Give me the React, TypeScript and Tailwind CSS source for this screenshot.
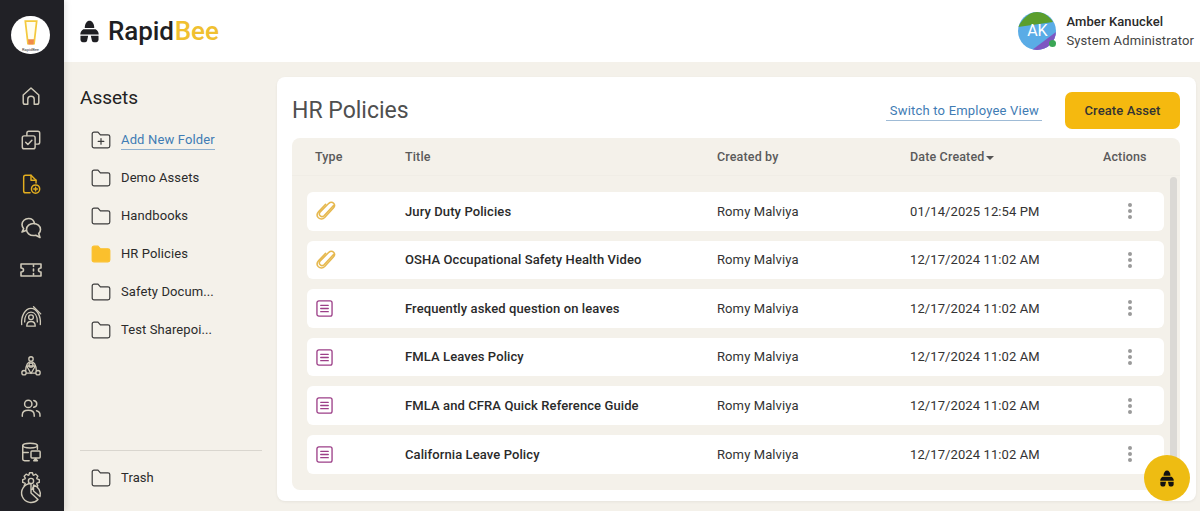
import React from "react";

const F = "font-['Roboto',sans-serif]";

function Bee({ className = "", color = "#1f1f23" }: { className?: string; color?: string }) {
  return (
    <svg viewBox="0 0 20 24" className={className} fill={color}>
      <path d="M5 8.2 C5 3.4 7.4 0.6 10 0.6 C12.6 0.6 15 3.4 15 8.2 Z" />
      <path d="M3.6 9.6 H16.4 C18.5 11 19.7 13 19.7 15.2 H0.3 C0.3 13 1.5 11 3.6 9.6 Z" />
      <path d="M0.5 16.5 H8.6 L7.5 21.6 C7.3 22.7 6.5 23.3 5.5 23.3 H3 C1.5 23.3 0.7 22.2 0.5 20.7 Z" />
      <path d="M19.5 16.5 H11.4 L12.5 21.6 C12.7 22.7 13.5 23.3 14.5 23.3 H17 C18.5 23.3 19.3 22.2 19.5 20.7 Z" />
    </svg>
  );
}

const sideStroke = "#cfc9b8";

function SI({ children, box = 24, cls = "w-[22px] h-[22px]", color = sideStroke }: { children: React.ReactNode; box?: number; cls?: string; color?: string }) {
  return (
    <svg viewBox={`0 0 ${box} ${box}`} className={cls} fill="none" stroke={color} strokeWidth="1.6" strokeLinecap="round" strokeLinejoin="round">
      {children}
    </svg>
  );
}

function gearPath(cx: number, cy: number, ro: number, ri: number, teeth: number) {
  const pts: string[] = [];
  const step = (Math.PI * 2) / teeth;
  for (let i = 0; i < teeth; i++) {
    const a = i * step - Math.PI / 2;
    const p = (r: number, d: number) => `${(cx + r * Math.cos(a + d)).toFixed(2)} ${(cy + r * Math.sin(a + d)).toFixed(2)}`;
    pts.push(p(ri, -step * 0.42), p(ro, -step * 0.22), p(ro, step * 0.22), p(ri, step * 0.42));
  }
  return "M" + pts.join(" L") + " Z";
}

const sideIcons: { h: string; el: React.ReactNode }[] = [
  { h: "h-[44px]", el: <SI><path d="M3.5 11 L12 3.2 L20.5 11 V19 C20.5 20.2 19.7 21 18.5 21 H15.5 V15.5 C15.5 13.6 14 12.2 12 12.2 C10 12.2 8.5 13.6 8.5 15.5 V21 H5.5 C4.3 21 3.5 20.2 3.5 19 Z" /></SI> },
  { h: "h-[44px]", el: <SI><rect x="2.5" y="7.5" width="14" height="14" rx="2" /><path d="M7.5 7 V4.5 C7.5 3.3 8.3 2.5 9.5 2.5 H19.5 C20.7 2.5 21.5 3.3 21.5 4.5 V14.5 C21.5 15.7 20.7 16.5 19.5 16.5 H17" /><path d="M6.2 14.5 L8.6 17 L13 12.2" /></SI> },
  { h: "h-[44px]", el: <SI color="#e3ae1f"><path d="M11 21.5 H6 C4.8 21.5 4 20.7 4 19.5 V4.5 C4 3.3 4.8 2.5 6 2.5 H12 L17.5 8 V11" /><path d="M12 2.5 V8 H17.5" /><circle cx="17" cy="17.5" r="4.5" /><path d="M17 15.5 V19.5 M15 17.5 H19" /></SI> },
  { h: "h-[44px]", el: <SI cls="w-[24px] h-[24px]"><path d="M15.5 7.5 C15 4.6 12.6 2.5 9.5 2.5 C6 2.5 3 5.2 3 8.6 C3 10.2 3.7 11.6 4.7 12.7 L3 16 L7 14.6" /><path d="M14.5 7.5 C18.3 7.5 21.5 10.1 21.5 13.5 C21.5 15.1 20.8 16.5 19.7 17.6 L21 21.5 L16.8 19.2 C16.1 19.4 15.3 19.5 14.5 19.5 C10.7 19.5 7.5 16.9 7.5 13.5 C7.5 10.1 10.7 7.5 14.5 7.5 Z" /></SI> },
  { h: "h-[40px]", el: <SI cls="w-[24px] h-[24px]"><path d="M2 6 H22 V10 C20.6 10 19.5 11 19.5 12 C19.5 13 20.6 14 22 14 V18 H2 V14 C3.4 14 4.5 13 4.5 12 C4.5 11 3.4 10 2 10 Z" /><path d="M14.5 7 V8.5 M14.5 11 V13 M14.5 15.5 V17" /></SI> },
  {
    h: "h-[52px]",
    el: (
      <SI cls="w-[26px] h-[22px]" box={26}>
        <path d="M2 23 C1 13.5 6 4 13 4 C20 4 25 13.5 24 23" />
        <path d="M5.5 20 C5.5 13 8.5 8.5 13 8.5 C17.5 8.5 20.5 13 20.5 20" />
        <path d="M16 2 L24.5 10.5" />
        <circle cx="13" cy="14.5" r="2.8" />
        <path d="M8 25 C8 21.5 10 19.5 13 19.5 C16 19.5 18 21.5 18 25 Z" />
      </SI>
    ),
  },
  {
    h: "h-[48px]",
    el: (
      <SI cls="w-[24px] h-[20px]">
        <circle cx="12" cy="3.5" r="2.6" />
        <circle cx="3.6" cy="20" r="2.6" />
        <circle cx="20.4" cy="20" r="2.6" />
        <path d="M12 7 C8.4 7 6 9.8 5.6 17.5 M12 7 C15.6 7 18 9.8 18.4 17.5" />
        <path d="M6.8 12 H17.2 L12 21 Z" />
        <path d="M6.5 20.5 H17.5" />
        <circle cx="12" cy="11" r="2.4" />
      </SI>
    ),
  },
  { h: "h-[36px]", el: <SI><circle cx="9" cy="7.5" r="4" /><path d="M2.5 21 V19.5 C2.5 16.2 5.4 14.5 9 14.5 C12.6 14.5 15.5 16.2 15.5 19.5 V21" /><path d="M15 3.8 C17 4.2 18.3 5.7 18.3 7.5 C18.3 9.3 17 10.8 15 11.2" /><path d="M18 15 C20.3 15.6 21.8 17.1 21.8 19.5 V21" /></SI> },
  { h: "h-[52px]", el: <SI><ellipse cx="11" cy="5" rx="8" ry="2.6" /><path d="M3 5 V20 C3 21 3.8 21.5 5 21.5 H10" /><path d="M19 5 V9" /><path d="M3 12.5 H9" /><rect x="12" y="11" width="10" height="7.5" rx="1" /><path d="M15 21.5 L17 19 L19 21.5 Z" /></SI> },
  {
    h: "h-[36px] -mt-[7px]",
    el: (
      <svg viewBox="0 0 24 36" className="w-[24px] h-[36px]" fill="none" stroke={sideStroke} strokeWidth="1.4" strokeLinecap="round" strokeLinejoin="round">
        <path d={gearPath(12, 10, 8.4, 6.4, 8)} />
        <circle cx="12" cy="10" r="2.6" />
        <path d="M12 12.5 A9.5 9.5 0 1 0 19 28.5 L12 22 Z" fill="#212126" />
        <path d="M14.5 14 A9.5 9.5 0 0 1 21 25.5 L14.5 20 Z" fill="#212126" />
      </svg>
    ),
  },
];

function FolderIcon({ filled = false, plus = false }: { filled?: boolean; plus?: boolean }) {
  return (
    <svg viewBox="0 0 20 18" className="w-[20px] h-[18px] shrink-0" fill={filled ? "#fbc02d" : "none"} stroke={filled ? "#fbc02d" : "#3c3c3c"} strokeWidth="1.2" strokeLinejoin="round" strokeLinecap="round">
      <path d="M1.2 3 C1.2 2 1.9 1.2 3 1.2 H7 L9.4 3.8 H17 C18.1 3.8 18.8 4.6 18.8 5.6 V15 C18.8 16 18.1 16.8 17 16.8 H3 C1.9 16.8 1.2 16 1.2 15 Z" />
      {plus && <path d="M10 7.6 V13.2 M7.2 10.4 H12.8" />}
    </svg>
  );
}

function FolderRow({ label, filled, plus, link }: { label: string; filled?: boolean; plus?: boolean; link?: boolean }) {
  return (
    <div className="flex items-center h-[38px] pl-[11px]">
      <FolderIcon filled={filled} plus={plus} />
      {link ? (
        <span className="ml-[10px] text-[13px] leading-[19px] tracking-[0.15px] text-[#3f7cb4] border-b border-[#8fb0ce]">{label}</span>
      ) : (
        <span className="ml-[10px] text-[13px] tracking-[0.1px] text-[#2b2b2b]">{label}</span>
      )}
    </div>
  );
}

function Clip() {
  return (
    <svg viewBox="0 0 24 24" className="w-[20px] h-[20px]" fill="none" stroke="#e6b84e" strokeWidth="1.8" strokeLinecap="round" strokeLinejoin="round">
      <path d="M21 5.5 L9.6 17.6 C8.2 19 6.3 19 5 17.7 C3.7 16.4 3.8 14.6 5.1 13.2 L15.4 2.8 C17.1 1.2 19.6 1.2 21.1 2.8 C22.6 4.4 22.5 6.7 20.9 8.3 L10.4 19.9 C8.2 22.2 5 22.3 2.9 20.2 C0.9 18.1 1 15 3.2 12.7 L11.5 4" />
    </svg>
  );
}

function Doc() {
  return (
    <svg viewBox="0 0 18 18" className="w-[17px] h-[17px]" fill="none" stroke="#9c3f88" strokeWidth="1.4" strokeLinecap="round">
      <rect x="1" y="1" width="16" height="16" rx="2" />
      <path d="M5 5.6 H13 M5 9 H13 M5 12.4 H13" />
    </svg>
  );
}

const rows = [
  { t: "Jury Duty Policies", k: "clip", d: "01/14/2025 12:54 PM" },
  { t: "OSHA Occupational Safety Health Video", k: "clip", d: "12/17/2024 11:02 AM" },
  { t: "Frequently asked question on leaves", k: "doc", d: "12/17/2024 11:02 AM" },
  { t: "FMLA Leaves Policy", k: "doc", d: "12/17/2024 11:02 AM" },
  { t: "FMLA and CFRA Quick Reference Guide", k: "doc", d: "12/17/2024 11:02 AM" },
  { t: "California Leave Policy", k: "doc", d: "12/17/2024 11:02 AM" },
];

export default function App() {
  return (
    <div className={`${F} relative w-[1200px] h-[511px] overflow-hidden flex bg-[#f4f1ea]`}>
      <aside className="relative z-10 w-[64px] shrink-0 h-full bg-[#212126] flex flex-col items-center pt-[16px] pr-[3px] overflow-hidden shadow-[2px_0_6px_rgba(0,0,0,0.1)]">
        <div className="w-[39px] h-[38px] shrink-0 rounded-full bg-white flex flex-col items-center overflow-hidden pt-[2px]">
          <svg viewBox="0 0 16 30" className="w-[14px] h-[30px] shrink-0">
            <path d="M1.5 1.5 H14.5 L11.5 27 H4.5 Z" fill="#fffdf0" stroke="#f4c93e" strokeWidth="2" />
            <path d="M4.6 22 H11.4 L11 28 H5 Z" fill="#f08a4b" />
          </svg>
          <span className="text-[4px] leading-[4px] text-[#333] whitespace-nowrap">RapidBee</span>
        </div>
        <div className="mt-[20px] flex flex-col items-center shrink-0">
          {sideIcons.map((s, i) => (
            <div key={i} className={`${s.h} flex items-center justify-center shrink-0`}>{s.el}</div>
          ))}
        </div>
      </aside>
      <div className="flex-1 min-w-0 flex flex-col">
        <header className="h-[62px] shrink-0 bg-white flex items-center justify-between pl-[16px] pr-[6px]">
          <div className="flex items-center">
            <Bee className="w-[19px] h-[23px]" />
            <span className="ml-[9px] text-[26px] font-medium leading-none text-[#1f1f23] tracking-[-0.1px]">Rapid<span className="ml-[1px] text-[#f0c030]">Bee</span></span>
          </div>
          <div className="flex items-center">
            <div className="relative w-[38px] h-[38px]">
              <div className="w-[38px] h-[38px] rounded-full overflow-hidden relative bg-[#5aace6] flex items-center justify-center">
                <svg viewBox="0 0 38 38" className="absolute inset-0 w-full h-full">
                  <path d="M0 15 C4 8 10 0 19 0 C26 0 31 4 35 10 Z" fill="#5b9e2c" />
                  <path d="M14 38 L38 20 V38 Z" fill="#7e57c2" />
                </svg>
                <span className="relative text-white text-[16px]">AK</span>
              </div>
              <span className="absolute right-[0px] bottom-[3px] w-[7px] h-[7px] rounded-full bg-[#3aa655]" />
            </div>
            <div className="ml-[10px] flex flex-col">
              <span className="text-[13px] font-medium leading-[19px] text-[#2a2a2a] tracking-[0.1px]">Amber Kanuckel</span>
              <span className="text-[13px] leading-[19px] text-[#444] tracking-[0.12px]">System Administrator</span>
            </div>
          </div>
        </header>
        <div className="flex-1 min-h-0 flex">
          <div className="w-[213px] shrink-0 pl-[16px] pr-[15px] flex flex-col pb-[14px]">
            <h2 className="mt-[25px] text-[19px] leading-[21px] text-[#222]">Assets</h2>
            <div className="mt-[13px] flex flex-col">
              <FolderRow label="Add New Folder" plus link />
              <FolderRow label="Demo Assets" />
              <FolderRow label="Handbooks" />
              <FolderRow label="HR Policies" filled />
              <FolderRow label="Safety Docum..." />
              <FolderRow label="Test Sharepoi..." />
            </div>
            <div className="mt-auto border-t border-[#d9d6cf] pt-[8px]">
              <FolderRow label="Trash" />
            </div>
          </div>
          <div className="flex-1 min-w-0 pt-[15px] pr-[4px] pb-[10px]">
            <div className="h-full bg-white rounded-[8px] pl-[15px] pr-[16px] pb-[11px] flex flex-col shadow-[0_1px_3px_rgba(0,0,0,0.06)]">
              <div className="flex items-center justify-between h-[61px] shrink-0 pt-[7px]">
                <h1 className="text-[23px] text-[#4f4f4f] pt-[1px]">HR Policies</h1>
                <div className="flex items-center">
                  <span className="text-[13px] tracking-[0.2px] leading-[19px] text-[#3f7cb4] pl-[4px] pr-[3px] border-b border-[#9fbbd6]">Switch to Employee View</span>
                  <button className="ml-[23px] w-[115px] h-[37px] rounded-[7px] bg-[#f5b90f] text-[13px] font-medium tracking-[0.1px] text-[#333] -mt-[1px]">Create Asset</button>
                </div>
              </div>
              <div className="flex-1 min-h-0 bg-[#f4f1ea] rounded-[8px] flex flex-col">
                <div className="h-[38px] shrink-0 flex items-center pt-[2px] border-b border-[#f0ede6] text-[12.5px] font-medium tracking-[0.15px] text-[#5a5a5a]">
                  <span className="w-[113px] pl-[23px]">Type</span>
                  <span className="w-[312px]">Title</span>
                  <span className="w-[193px]">Created by</span>
                  <span className="w-[193px] flex items-center">
                    Date Created
                    <span className="ml-[2px] w-0 h-0 border-x-[4px] border-x-transparent border-t-[4px] border-t-[#555]" />
                  </span>
                  <span>Actions</span>
                </div>
                <div className="flex-1 min-h-0 flex pl-[15px] pr-[3px] pt-[1px]">
                  <div className="flex-1 min-w-0 flex flex-col gap-[10px] pt-[15px]">
                    {rows.map((r) => (
                      <div key={r.t} className="h-[38.6px] shrink-0 bg-white rounded-[6px] flex items-center">
                        <span className="w-[98px] pl-[9px] flex items-center">{r.k === "clip" ? <Clip /> : <Doc />}</span>
                        <span className="w-[312px] text-[13px] font-medium tracking-[0.1px] text-[#2a2a2a]">{r.t}</span>
                        <span className="w-[193px] text-[13px] text-[#333] tracking-[0.1px]">Romy Malviya</span>
                        <span className="w-[218px] text-[13px] text-[#333] tracking-[0.1px]">{r.d}</span>
                        <span className="flex flex-col gap-[2px]">
                          <i className="w-[4px] h-[4px] rounded-full bg-[#9a9a9a]" />
                          <i className="w-[4px] h-[4px] rounded-full bg-[#9a9a9a]" />
                          <i className="w-[4px] h-[4px] rounded-full bg-[#9a9a9a]" />
                        </span>
                      </div>
                    ))}
                  </div>
                  <div className="ml-[6px] w-[7px] shrink-0 mb-[12px] rounded-full bg-[#dbd9d5]" />
                </div>
              </div>
            </div>
          </div>
        </div>
      </div>
      <div className="absolute left-[1144px] top-[455px] w-[46px] h-[46px] rounded-full bg-[#eebc12] flex items-center justify-center">
        <Bee className="w-[14px] h-[17px]" color="#111" />
      </div>
    </div>
  );
}
